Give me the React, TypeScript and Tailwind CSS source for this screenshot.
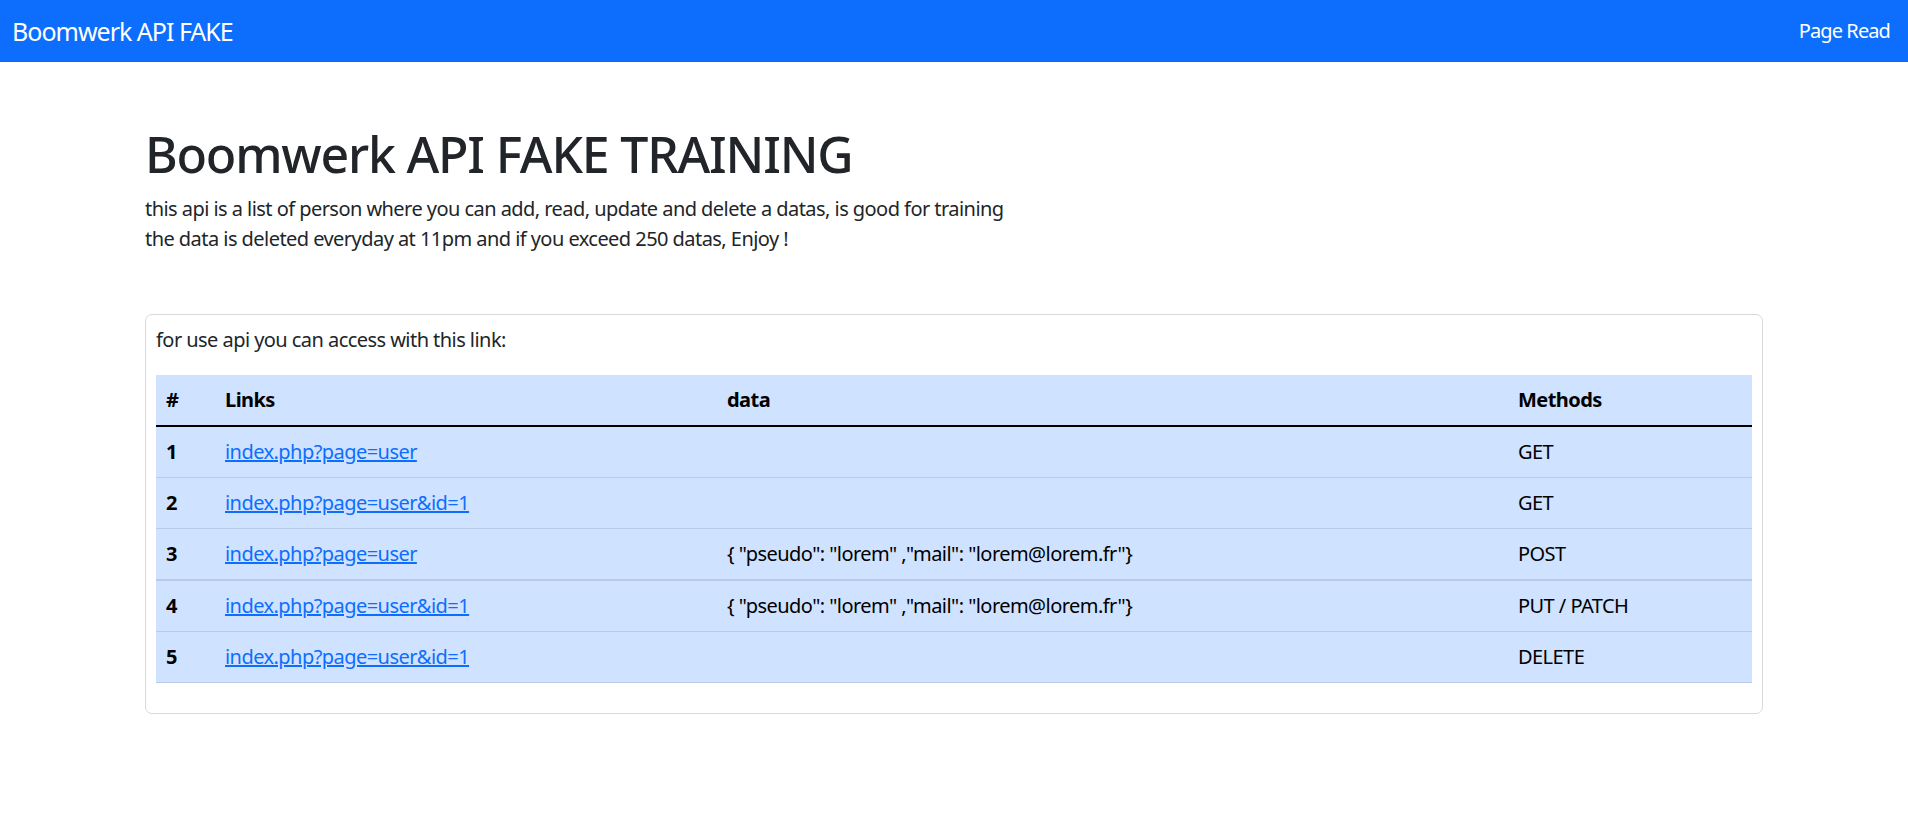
import React from "react";

const rows = [
  { id: 1, link: "index.php?page=user", data: "", method: "GET" },
  { id: 2, link: "index.php?page=user&id=1", data: "", method: "GET" },
  {
    id: 3,
    link: "index.php?page=user",
    data: '{ "pseudo": "lorem" ,"mail": "lorem@lorem.fr"}',
    method: "POST",
  },
  {
    id: 4,
    link: "index.php?page=user&id=1",
    data: '{ "pseudo": "lorem" ,"mail": "lorem@lorem.fr"}',
    method: "PUT / PATCH",
  },
  { id: 5, link: "index.php?page=user&id=1", data: "", method: "DELETE" },
];

const App = () => {
  return (
    <div
      className="min-h-screen bg-white text-[#212529] text-[20px] leading-[30px] tracking-[-0.55px]"
      style={{ fontFamily: '"Noto Sans", "Open Sans", sans-serif' }}
    >
      {/* Navbar */}
      <nav className="h-[62px] bg-[#0d6efd] flex items-center justify-between pl-[12px] pr-[18px]">
        <a href="#" className="text-white text-[25px] leading-[38px] tracking-[-1px]">
          Boomwerk API FAKE
        </a>
        <a href="#" className="text-white text-[20px] tracking-[-0.9px]">
          Page Read
        </a>
      </nav>

      <div className="mx-auto w-[1650px] px-[16px] pt-[62px]">
        <h1 className="text-[50px] leading-[60px] font-medium mb-[10px] tracking-[-1.2px]">
          Boomwerk API FAKE TRAINING
        </h1>
        <p className="mb-[60px]">
          this api is a list of person where you can add, read, update and delete a datas, is good for training
          <br />
          the data is deleted everyday at 11pm and if you exceed 250 datas, Enjoy !
        </p>

        <div className="border border-[#d9d9d9] rounded-[7px] p-[10px]">
          <p className="mb-[20px]">for use api you can access with this link:</p>
          <table className="w-full table-fixed border-collapse bg-[#cfe2ff] text-black mb-[20px]">
            <colgroup>
              <col className="w-[59px]" />
              <col className="w-[502px]" />
              <col className="w-[791px]" />
              <col />
            </colgroup>
            <thead>
              <tr className="border-b-[2.5px] border-black">
                <th className="text-left font-bold px-[10px] py-[10px]">#</th>
                <th className="text-left font-bold px-[10px] py-[10px]">Links</th>
                <th className="text-left font-bold px-[10px] py-[10px]">data</th>
                <th className="text-left font-bold px-[10px] py-[10px]">Methods</th>
              </tr>
            </thead>
            <tbody>
              {rows.map((r) => (
                <tr
                  key={r.id}
                  className={
                    r.id === 3
                      ? "border-b-2 border-[#b9c9e3]"
                      : "border-b border-[#bacbe6]"
                  }
                >
                  <td className="font-bold px-[10px] py-[10px]">{r.id}</td>
                  <td className="px-[10px] py-[10px]">
                    <a href="#" className="text-[#0d6efd] underline">
                      {r.link}
                    </a>
                  </td>
                  <td className="px-[10px] py-[10px]">{r.data}</td>
                  <td className="px-[10px] py-[10px]">{r.method}</td>
                </tr>
              ))}
            </tbody>
          </table>
        </div>
      </div>
    </div>
  );
};

export default App;
